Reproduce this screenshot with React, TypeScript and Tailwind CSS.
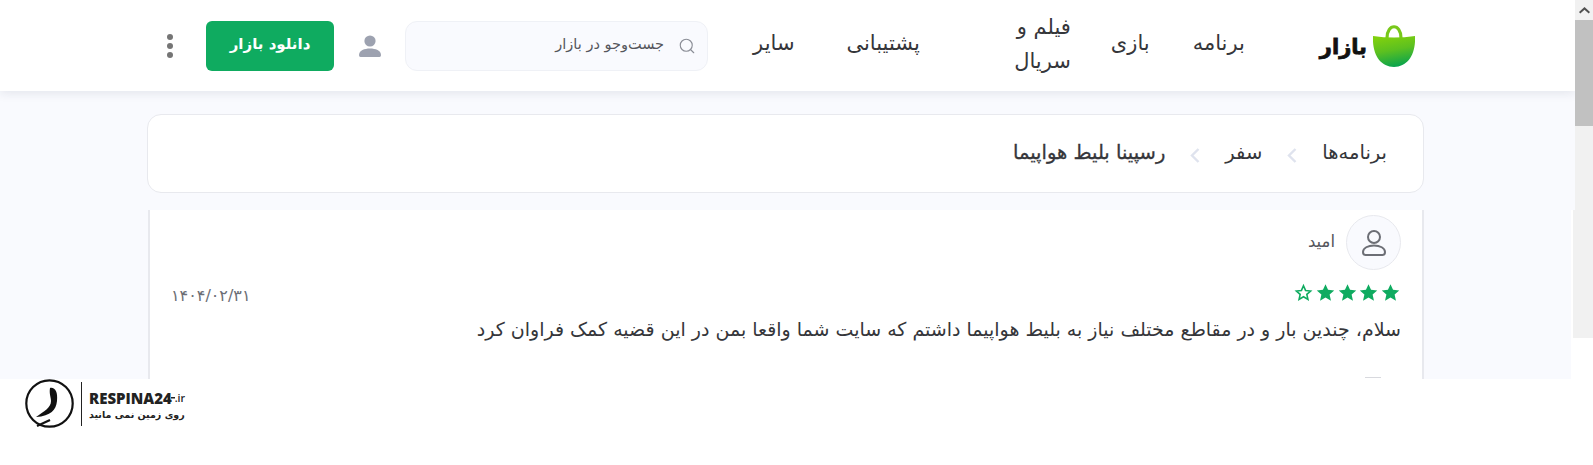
import { Search } from "lucide-react";

function BazaarLogo() {
  return (
    <div className="flex items-center gap-[6px]" dir="ltr">
      <span
        className="mt-[3px] text-[21px] leading-none font-bold text-[#111] [-webkit-text-stroke:0.8px_#111]"
        dir="rtl"
      >
        بازار
      </span>
      <svg width="42" height="44" viewBox="0 0 42 44">
        <defs>
          <linearGradient id="bag" x1="0.35" y1="0" x2="0.6" y2="1">
            <stop offset="0" stopColor="#80d00e" />
            <stop offset="0.45" stopColor="#5cc020" />
            <stop offset="1" stopColor="#06a24f" />
          </linearGradient>
        </defs>
        <path d="M14 14 C14 -1 28 -1 28 14" fill="none" stroke="#78c81a" strokeWidth="3.2" />
        <path
          d="M0 12 C7 13 14 13.500 21 13.500 C28 13.500 35 13 42 12 C43 30 35 43 21 43 C7 43 -1 30 0 12 Z"
          fill="url(#bag)"
        />
      </svg>
    </div>
  );
}

function Stars() {
  return (
    <div className="mr-[1px] flex gap-[2.67px]">
      {[0, 1, 2, 3].map((i) => (
        <svg key={i} width="19" height="19" viewBox="0 0 24 24" fill="#0fab60">
          <path d="M12 1.500l3.200 7.100 7.800.8-5.800 5.200 1.700 7.700L12 18.300l-6.900 4 1.700-7.700L1 9.400l7.800-.8z" />
        </svg>
      ))}
      <svg width="19" height="19" viewBox="0 0 24 24" fill="none" stroke="#0fab60" strokeWidth="2">
        <path d="M12 3.500l2.600 5.900 6.400.7-4.800 4.300 1.400 6.300-5.600-3.300-5.600 3.300 1.400-6.300L3 10.100l6.400-.7z" />
      </svg>
    </div>
  );
}

function Chevron() {
  return (
    <svg width="10" height="15" viewBox="0 0 10 15" fill="none" stroke="#dfe3ee" strokeWidth="2.400" className="mt-[6px]">
      <path d="M8.500 1L2 7.500l6.500 6.500" />
    </svg>
  );
}

function PersonSolid() {
  return (
    <svg width="22" height="22" viewBox="0 0 22 22" fill="#9da2b0">
      <circle cx="11" cy="6" r="5.600" />
      <path d="M0 20c0-4.500 5.500-6.500 11-6.500S22 15.500 22 20c0 1.200-.6 2-1.500 2H1.500C.6 22 0 21.200 0 20z" />
    </svg>
  );
}

function PersonOutline() {
  return (
    <svg width="26" height="28" viewBox="0 0 26 28" fill="none" stroke="#6c6e75" strokeWidth="2">
      <circle cx="13" cy="8" r="6" />
      <path d="M2 23c0-4 5-6.500 11-6.500S24 19 24 23c0 1.800-1 3-2.500 3h-17C3 26 2 24.800 2 23z" />
    </svg>
  );
}

function RespinaLogo() {
  return (
    <div className="flex items-center gap-[7px]" dir="ltr">
      <svg width="49" height="50" viewBox="0 0 49 50">
        <circle cx="24.500" cy="24.500" r="23.200" fill="none" stroke="#111" strokeWidth="2.200" />
        <path d="M25 9 C30 8 33 13 32 22 C31 31 26 37 11 38 C19 32 26 29 26 22 C26 18 24 15 25 9 Z" fill="#111" />
        <path d="M12 47 L25 41" stroke="#111" strokeWidth="2.200" fill="none" />
      </svg>
      <div className="h-[44px] w-px bg-[#222]" />
      <div className="flex flex-col items-start pt-[3px]">
        <span className="flex items-center font-['Open_Sans',sans-serif] text-[15px] leading-[17px] font-extrabold text-[#222]">
          RESPINA24
          {/* plane wing running off the 4 */}
          <svg width="4" height="8" viewBox="0 0 4 8" fill="#222" className="-ml-[1px]">
            <path d="M0 3h4v1.500H0z" />
          </svg>
          <span className="text-[10.500px] font-semibold">.ir</span>
        </span>
        <span className="mt-[1px] text-[9.500px] leading-[14px] font-bold text-[#222]" dir="rtl">
          روی زمین نمی مانید
        </span>
      </div>
    </div>
  );
}

export default function App() {
  return (
    <div className="h-[465px] w-[1593px] overflow-hidden bg-white font-['DejaVu_Sans','Noto_Sans',sans-serif]">
      <div className="flex h-[379px]">
        <div className="w-[1575px] shrink-0 overflow-hidden" dir="rtl">
          <div className="h-[210px] bg-[#f9fafe]">
            {/* Header */}
            <header className="flex h-[91px] items-center bg-white pr-[160px] shadow-[0_2px_10px_rgba(30,40,70,0.1)]">
              <BazaarLogo />
              <nav className="mr-[75px] flex items-center pb-[4px] text-[21px] text-[#35363a]">
                <a className="ml-[43px] whitespace-nowrap">برنامه</a>
                <a className="ml-[40px] whitespace-nowrap">بازی</a>
                <a className="ml-[91px] w-[60px] leading-[34px]">فیلم و سریال</a>
                <a className="ml-[52px] whitespace-nowrap">پشتیبانی</a>
                <a className="whitespace-nowrap">سایر</a>
              </nav>
              <div className="mr-[45px] flex h-[50px] w-[303px] items-center gap-[14px] rounded-[12px] border border-[#eff1f6] bg-[#f9fafe] pr-[11px] pb-[2px] text-[14.500px] text-[#55565c]">
                <Search className="mt-[2px] h-[18px] w-[18px] text-[#8a8d96]" strokeWidth={1.5} />
                <span>جست‌وجو در بازار</span>
              </div>
              <div className="mr-[24px]">
                <PersonSolid />
              </div>
              <button className="mr-[25px] h-[50px] w-[128px] rounded-[6px] bg-[#0fab60] pb-[3px] text-[15px] font-bold text-white">
                دانلود بازار
              </button>
              <div className="mr-[33px] flex flex-col gap-[3px]">
                <span className="h-[6px] w-[6px] rounded-full bg-[#757575]" />
                <span className="h-[6px] w-[6px] rounded-full bg-[#757575]" />
                <span className="h-[6px] w-[6px] rounded-full bg-[#757575]" />
              </div>
            </header>

            {/* Breadcrumb */}
            <div className="mt-[23px] mr-[151px] flex h-[79px] w-[1277px] items-center gap-[25px] rounded-[14px] border border-[#e8e9ee] bg-white pr-[36px] pb-[2px] text-[19.500px] text-[#35363a]">
              <span>برنامه‌ها</span>
              <Chevron />
              <span>سفر</span>
              <Chevron />
              <span className="[-webkit-text-stroke:0.3px_#35363a]">رسپینا بلیط هواپیما</span>
            </div>
          </div>

          {/* Page below the breadcrumb is 4px narrower, with the scrollbar track poking in */}
          <div className="flex h-[169px]" dir="ltr">
            <div className="w-[1571px] shrink-0 bg-[#f9fafe] pr-[147px]" dir="rtl">
              <div className="h-[169px] w-[1276px] border-x-2 border-[#e8e9ee] bg-white pt-[5px] pr-[21px] pl-[21px]">
                <div className="flex items-center gap-[11px]">
                  <div className="flex h-[55px] w-[55px] items-center justify-center rounded-full border border-[#e8e9ee] bg-[#f9fafe]">
                    <PersonOutline />
                  </div>
                  <span className="text-[16.500px] text-[#55565c]">امید</span>
                </div>
                <div className="mt-[13px] flex items-start justify-between">
                  <Stars />
                  <span className="mt-[3px] text-[16px] leading-[20px] font-medium tracking-[1.6px] text-[#6c6e75]">۱۴۰۴/۰۲/۳۱</span>
                </div>
                <p className="mt-[8px] text-[19px] leading-[30px] text-[#35363a]">
                  سلام، چندین بار و در مقاطع مختلف نیاز به بلیط هواپیما داشتم که سایت شما واقعا بمن در این قضیه کمک فراوان کرد
                </p>
                <div className="mt-[33px] mr-[20px] h-px w-[16px] bg-[#d8d9de]" />
              </div>
            </div>
            <div className="ml-[2px] h-[128px] w-[2px] bg-[#f1f1f1]" />
          </div>
        </div>

        {/* Scrollbar */}
        <div className="flex h-[338px] w-[18px] flex-col bg-[#f1f1f1]">
          <div className="flex h-[20px] items-center justify-center">
            <svg width="11" height="7" viewBox="0 0 11 7" fill="#505050">
              <path d="M5.500 0l5.500 5-1.300 1.500-4.200-3.700-4.200 3.700L0 5z" />
            </svg>
          </div>
          <div className="h-[106px] bg-[#c1c1c1]" />
        </div>
      </div>

      <div className="pl-[25px]">
        <RespinaLogo />
      </div>
    </div>
  );
}
